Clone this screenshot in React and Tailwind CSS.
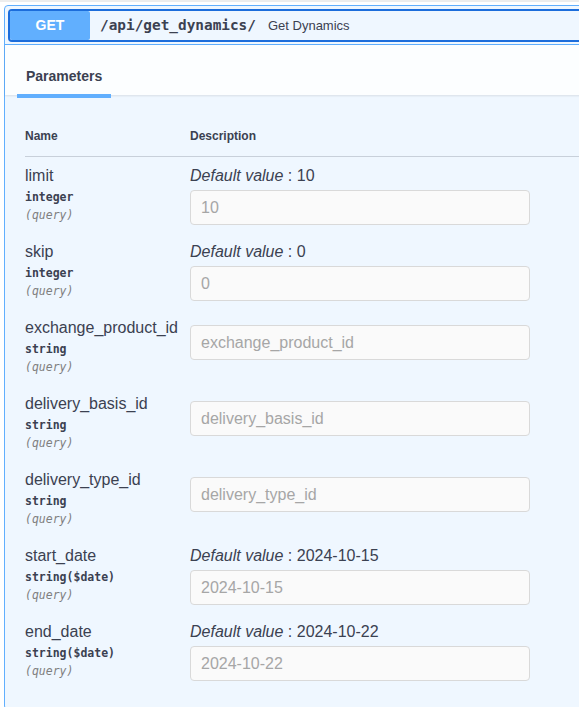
import React from "react";

const params = [
  { name: "limit", type: "integer", def: "10" },
  { name: "skip", type: "integer", def: "0" },
  { name: "exchange_product_id", type: "string", placeholder: "exchange_product_id" },
  { name: "delivery_basis_id", type: "string", placeholder: "delivery_basis_id" },
  { name: "delivery_type_id", type: "string", placeholder: "delivery_type_id" },
  { name: "start_date", type: "string($date)", def: "2024-10-15" },
  { name: "end_date", type: "string($date)", def: "2024-10-22" },
];

function Row({ p }) {
  const ph = p.def !== undefined ? p.def : p.placeholder;
  return (
    <div className="flex pt-[10px] pb-[8px]">
      <div className="w-[165px] h-[58px] shrink-0">
        <div className="text-[16px] leading-[18px] text-[#3b4151]">{p.name}</div>
        <div className="mt-[3px] font-['DejaVu_Sans_Mono',monospace] font-bold text-[11.5px] leading-[18px] text-[#3b4151]">
          {p.type}
        </div>
        <div className="font-['DejaVu_Sans_Mono',monospace] italic text-[11.5px] leading-[19px] text-[#7f7f7f]">
          (query)
        </div>
      </div>
      <div className="flex flex-col">
        {p.def !== undefined && (
          <div className="text-[16px] leading-[18px] text-[#3b4151]">
            <i>Default value</i> : {p.def}
          </div>
        )}
        <input
          readOnly
          placeholder={ph}
          className={
            (p.def !== undefined ? "mt-[5px] " : "mt-[6px] ") +
            "w-[340px] h-[35px] px-[10px] rounded-[4px] border border-[#d9d9d9] bg-[#fafafa] text-[16px] text-[#3b4151] placeholder:text-[#a6a6a6] outline-none font-['Liberation_Sans',Arial,sans-serif]"
          }
        />
      </div>
    </div>
  );
}

export default function App() {
  return (
    <div className="w-[579px] h-[707px] overflow-hidden bg-white font-['Liberation_Sans',Arial,sans-serif]">
      <div className="h-[2px] bg-[#ededed]" />
      <div className="mt-[3px] ml-[4px] w-[660px] border border-[#61affe] rounded-[4px] bg-[#eff7ff]">
        {/* summary */}
        <div className="pt-[3px] pb-[2px] px-[3px] border-b border-[#61affe]">
          <div className="flex items-center border-2 border-[#1c6ddb] rounded-[4px] bg-[#eff7ff]">
            <div className="w-[80px] h-[29px] flex items-center justify-center bg-[#61affe] rounded-[2px] text-white font-bold text-[14px]">
              GET
            </div>
            <span className="ml-[10px] font-['DejaVu_Sans_Mono',monospace] font-bold text-[14.4px] text-[#3b4151]">
              /api/get_dynamics/
            </span>
            <span className="ml-[12px] text-[13px] text-[#3b4151]">Get Dynamics</span>
          </div>
        </div>
        {/* section header */}
        <div className="h-[50px] bg-[#fcfeff] shadow-[0_1px_2px_rgba(0,0,0,0.1)] px-[21px] pt-[19px]">
          <span className="relative inline-block text-[14px] leading-[16px] font-bold text-[#3b4151]">
            Parameters
            <span className="absolute left-[-9px] right-[-9px] top-[26px] h-[4px] bg-[#61affe]" />
          </span>
        </div>
        {/* table */}
        <div className="pt-[22px] px-[20px] pb-[20px]">
          <div className="flex pt-[12px] pb-[13px] border-b border-[#c8d0da] text-[12px] leading-[14px] font-bold text-[#3b4151]">
            <div className="w-[165px]">Name</div>
            <div>Description</div>
          </div>
          {params.map((p) => (
            <Row key={p.name} p={p} />
          ))}
        </div>
      </div>
    </div>
  );
}
